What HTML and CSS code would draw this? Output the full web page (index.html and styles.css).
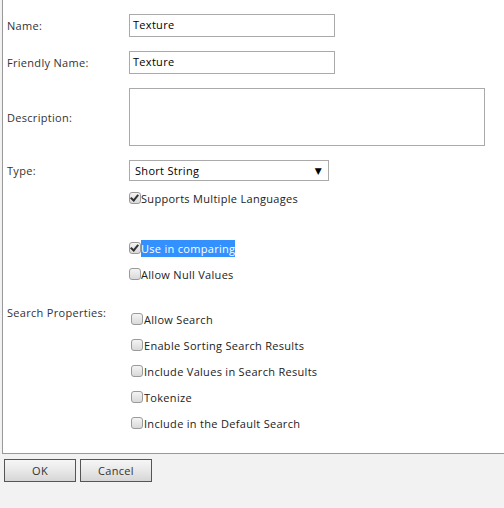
FILE: index.html
```html
<!DOCTYPE html>
<html>
<head>
<meta charset="utf-8">
<link rel="stylesheet" href="styles.css">
</head>
<body>
<div class="panel">
  <div class="row">
    <label class="lbl">Name:</label>
    <div class="field text-field">Texture</div>
  </div>
  <div class="row">
    <label class="lbl">Friendly Name:</label>
    <div class="field text-field">Texture</div>
  </div>
  <div class="row">
    <label class="lbl">Description:</label>
    <div class="field textarea"></div>
  </div>
  <div class="row">
    <label class="lbl">Type:</label>
    <div class="field select"><span>Short String</span><span class="arrow">▼</span></div>
  </div>
  <div class="checks first">
    <div class="check-row"><span class="cb checked"></span><span>Supports Multiple Languages</span></div>
  </div>
  <div class="checks second">
    <div class="check-row"><span class="cb checked"></span><span class="sel">Use in comparing</span></div>
    <div class="check-row"><span class="cb"></span><span>Allow Null Values</span></div>
  </div>
  <div class="search">
    <div class="lbl search-lbl">Search Properties:</div>
    <div class="search-list">
      <div class="check-row"><span class="cb"></span><span>Allow Search</span></div>
      <div class="check-row"><span class="cb"></span><span>Enable Sorting Search Results</span></div>
      <div class="check-row"><span class="cb"></span><span>Include Values in Search Results</span></div>
      <div class="check-row"><span class="cb"></span><span>Tokenize</span></div>
      <div class="check-row"><span class="cb"></span><span>Include in the Default Search</span></div>
    </div>
  </div>
</div>
<div class="buttons">
  <button class="btn">OK</button>
  <button class="btn">Cancel</button>
</div>
</body>
</html>
```
FILE: styles.css
```css
html, body {
  margin: 0;
  padding: 0;
}
body {
  background: #f2f2f2;
  font-family: "Open Sans", "DejaVu Sans", sans-serif;
  font-size: 11px;
  letter-spacing: 0.3px;
  color: #222;
  width: 504px;
  height: 508px;
  overflow: hidden;
}
.panel {
  margin-left: 2px;
  height: 454px;
  box-sizing: border-box;
  background: #fff;
  border-left: 1px solid #999;
  border-bottom: 1px solid #999;
  padding-top: 14px;
}
.row {
  display: flex;
  align-items: center;
  margin-bottom: 14px;
}
.lbl {
  width: 122px;
  padding-left: 4px;
  color: #333;
  flex: none;
}
.field {
  box-sizing: border-box;
  border: 1px solid #aaa;
  background: #fff;
}
.text-field {
  width: 206px;
  height: 23px;
  line-height: 20px;
  padding-left: 3px;
  color: #000;
}
.textarea {
  width: 356px;
  height: 58px;
}
.select {
  width: 200px;
  height: 21px;
  display: flex;
  justify-content: space-between;
  align-items: center;
  padding: 0 6px 0 5px;
  color: #000;
}
.arrow {
  font-size: 9px;
}
.row:nth-child(4) {
  margin-bottom: 4px;
}
.checks {
  padding-left: 126px;
}
.second {
  margin-top: 24px;
}
.check-row {
  height: 26px;
  display: flex;
  align-items: center;
  color: #222;
}
.cb {
  width: 12px;
  height: 12px;
  box-sizing: border-box;
  border: 1px solid #9a9a9a;
  border-radius: 3px;
  background: linear-gradient(#f4f4f4, #d9d9d9);
  flex: none;
  position: relative;
}
.cb.checked::after {
  content: "";
  position: absolute;
  left: 2px;
  top: 0px;
  width: 3px;
  height: 6px;
  border-right: 2px solid #333;
  border-bottom: 2px solid #333;
  transform: rotate(40deg);
}
.sel {
  background: #3390ff;
  color: #fff;
  line-height: 17px;
}
.search {
  display: flex;
  margin-top: 19px;
}
.search-lbl {
  line-height: 13px;
}
.search-list {
  padding-left: 2px;
}
.search-list .cb {
  margin-right: 1px;
}
.buttons {
  display: flex;
  gap: 4px;
  padding: 5px 0 0 4px;
}
.btn {
  width: 72px;
  height: 23px;
  box-sizing: border-box;
  border: 1px solid #555;
  border-radius: 0;
  background: linear-gradient(#f6f6f6, #e8e8e8 50%, #d6d6d6);
  font-family: "Open Sans", "DejaVu Sans", sans-serif;
  font-size: 11px;
  letter-spacing: 0.3px;
  color: #333;
  padding: 0;
  margin: 0;
}
```
